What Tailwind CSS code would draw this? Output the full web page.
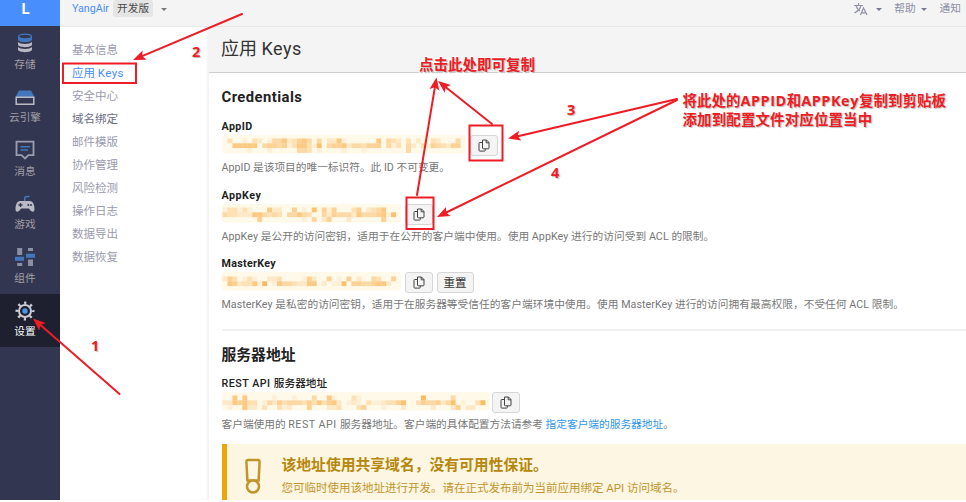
<!DOCTYPE html>
<html lang="zh-CN">
<head>
<meta charset="utf-8">
<title>应用 Keys</title>
<script src="https://cdn.jsdelivr.net/npm/@tailwindcss/browser@4"></script>
</head>
<body class="bg-white">
<svg class="hidden">
  <symbol id="copy" viewBox="0 0 12 13"><path d="M4.500 1h4l2.500 2.500v5.500a.8.8 0 0 1-.8.800H5.300a.8.8 0 0 1-.8-.8zM8.200 1v2.800H11M4.500 3.500H1.800a.8.8 0 0 0-.8.8v7a.8.8 0 0 0 .8.800h4.700a.8.8 0 0 0 .8-.8V10" fill="none" stroke="#444" stroke-width="1"/></symbol>
</svg>
<div class="relative w-[966px] h-[500px] overflow-hidden flex font-['Roboto','Noto_Sans_CJK_SC',sans-serif] whitespace-nowrap">
  <nav class="w-[60px] shrink-0 bg-[#333650] text-[#a09fa6] text-[10.7px] leading-[14px]">
    <div class="h-[26px] bg-[#488efc] text-white font-bold text-[15px] leading-[18px] text-center pr-[9px]">L</div>
    <a class="h-[53.5px] flex flex-col items-center pr-[10px] pt-[7px]">
      <svg class="w-[16px] h-[20px]" viewBox="0 0 16 20"><path d="M1 14v2.500c0 3.500 14 3.500 14 0V14c-2 2.500-12 2.500-14 0zM1 9v2.500c0 3.500 14 3.500 14 0V9c-2 2.500-12 2.500-14 0z" fill="#b9bac4"/><path d="M1 3.500v3c0 3.500 14 3.500 14 0v-3z" fill="#4277bd"/><ellipse cx="8" cy="3.500" rx="6.500" ry="2.300" fill="#333650" stroke="#4277bd" stroke-width="1.300"/></svg>
      <span class="mt-[4.500px]">存储</span></a>
    <a class="h-[53.5px] flex flex-col items-center pr-[10px] pt-[7px]">
      <svg class="w-[20px] h-[20px]" viewBox="0 0 20 20"><path d="M4 3.500h12L19.500 10H.5z" fill="#4277bd"/><path d="M1.200 10.200h17.600v7H1.200z" fill="none" stroke="#b9bac4" stroke-width="1.500"/></svg>
      <span class="mt-[4.500px]">云引擎</span></a>
    <a class="h-[53.5px] flex flex-col items-center pr-[10px] pt-[7px]">
      <svg class="w-[20px] h-[20px]" viewBox="0 0 20 20"><path d="M1.500 1.700h17v13.500h-5L10 18.500l-3.500-3.300h-5z" fill="none" stroke="#9c9db0" stroke-width="1.800"/><path d="M5.500 6.800H15M5.500 10H13" stroke="#4277bd" stroke-width="1.500"/></svg>
      <span class="mt-[5px]">消息</span></a>
    <a class="h-[53.5px] flex flex-col items-center pr-[10px] pt-[7px]">
      <svg class="w-[20px] h-[20px]" viewBox="0 0 20 20"><path d="M9.800 8V4.500Q9.800 2.500 12 2.500h2.500" fill="none" stroke="#4277bd" stroke-width="1.500"/><path d="M5 7h10c3 0 4.500 4 4.500 8 0 4-3 3.500-5.500-.5H6C3.500 18.500.5 19 .5 15 .5 11 2 7 5 7z" fill="#b9bac4"/><path d="M3.500 11h4M5.500 9v4" stroke="#333650" stroke-width="1.300"/><circle cx="13.300" cy="11" r="1" fill="#333650"/><circle cx="16" cy="11" r="1" fill="#333650"/></svg>
      <span class="mt-[4.500px]">游戏</span></a>
    <a class="h-[53.5px] flex flex-col items-center pr-[10px] pt-[7px]">
      <svg class="w-[20px] h-[20px]" viewBox="0 0 20 20"><path d="M2.200 1h5v7h-5zM2.200 16h5v3h-5zM13 1h5v3h-5zM13 12.500h5V19h-5z" fill="#8c8ea3"/><path d="M0 9.700h9v4H0zM11 6.700h9v4h-9z" fill="#4277bd"/></svg>
      <span class="mt-[5px]">组件</span></a>
    <a class="h-[53.5px] flex flex-col items-center pr-[10px] pt-[7px] bg-[#1f202f] text-white">
      <svg class="w-[20px] h-[20px]" viewBox="0 0 20 20"><circle cx="10" cy="10" r="8" fill="none" stroke="#cbcbd6" stroke-width="3" stroke-dasharray="2.200 4.083" stroke-dashoffset="1.100"/><circle cx="10" cy="10" r="6" fill="none" stroke="#cbcbd6" stroke-width="2"/><circle cx="10" cy="10" r="2.700" fill="#4b95ec"/></svg>
      <span class="mt-[4.500px]">设置</span></a>
  </nav>

  <div class="flex-1 min-w-0 flex flex-col">
    <header class="h-[27px] shrink-0 bg-[#f4f4f4] border-b border-[#e8e8e8] flex items-start pl-[12px] text-[10.7px] leading-[17px] text-[#8e8ea6]">
      <span class="text-[#488efc] w-[38px]">YangAir</span>
      <span class="ml-[3px] px-[4px] h-[17px] leading-[17px] bg-[#e5e5e5] rounded-[3px] text-[#4a4a4a] w-[40px]">开发版</span>
      <svg class="ml-[8px] mt-[8px] w-[6px] h-[3px]" viewBox="0 0 6 3"><path d="M0 0h6L3 3z" fill="#777"/></svg>
      <svg class="ml-auto mt-[3px] w-[14px] h-[13px]" viewBox="0 0 14 13" fill="none" stroke="#9292a8" stroke-width="1.200"><path d="M0 2.500h9M4.500 0v2.500M7 2.500Q6 7 .5 10M2 2.500Q3.500 7 6 8M6.500 12l3-7 3.500 7M7.500 9.800h4.500"/></svg>
      <svg class="ml-[8px] mt-[8px] w-[6px] h-[3px]" viewBox="0 0 6 3"><path d="M0 0h6L3 3z" fill="#777790"/></svg>
      <span class="ml-[12px]">帮助</span>
      <svg class="ml-[5px] mt-[8px] w-[6px] h-[3px]" viewBox="0 0 6 3"><path d="M0 0h6L3 3z" fill="#777790"/></svg>
      <span class="ml-[13px] mr-[5px]">通知</span>
    </header>
    <div class="flex-1 flex min-h-0">
      <aside class="w-[149px] shrink-0 pl-[12px] pt-[12px] text-[11.5px] leading-[23.05px] text-[#9a9aae] shadow-[inset_-2px_0_2px_#f3f3f3]">
        <div>基本信息</div>
        <div class="text-[#488efc]">应用 <span class="tracking-[0.4px]">Keys</span></div>
        <div>安全中心</div>
        <div class="text-[#6c6c84]">域名绑定</div>
        <div>邮件模版</div>
        <div>协作管理</div>
        <div>风险检测</div>
        <div>操作日志</div>
        <div>数据导出</div>
        <div>数据恢复</div>
      </aside>
      <main class="flex-1 min-w-0">
        <h1 class="h-[46px] bg-[#f4f4f4] border-b border-[#cfcfcf] pl-[12px] text-[18px] leading-[44px] text-[#333]">应用 <span class="tracking-[0.5px]">Keys</span></h1>
        <div class="pl-[12.500px]">
          <h2 class="h-[46px] text-[14.8px] leading-[48px] font-bold text-[#222] tracking-[0.45px]">Credentials</h2>
          <section class="h-[69px]">
            <div class="h-[16px] text-[10.7px] leading-[15px] font-bold text-[#222] tracking-[0.4px]">AppID</div>
            <div class="flex gap-[4.500px] h-[21px]">
              <svg class="mosaic w-[244px] h-[21px]" data-w="244" data-y="3.500" data-rows="030010320144623564040226100000060432030200320004|006666604554513663170455624435550413042031543255|00000100010000044301000010001000000004"></svg>
              <button class="w-[28px] h-[21px] border border-[#d6d6d6] rounded-[3px] bg-[#f4f4f4] flex items-center justify-center"><svg class="w-[12px] h-[13px]"><use href="#copy"/></svg></button>
            </div>
            <p class="text-[10.7px] leading-[24px] text-[#777]">AppID 是该项目的唯一标识符。此 ID 不可变更。</p>
          </section>
          <section class="h-[68px]">
            <div class="h-[16px] text-[10.7px] leading-[15px] font-bold text-[#222] tracking-[0.5px]">AppKey</div>
            <div class="flex gap-[4.500px] h-[21px]">
              <svg class="mosaic w-[179px] h-[21px]" data-w="179" data-y="3.500" data-rows="133131000622005010705150003502346|43322266434304464300425444264445617|00000005000000001040250002000000500"></svg>
              <button class="w-[28px] h-[21px] border border-[#d6d6d6] rounded-[3px] bg-[#f4f4f4] flex items-center justify-center"><svg class="w-[12px] h-[13px]"><use href="#copy"/></svg></button>
            </div>
            <p class="text-[10.7px] leading-[24px] text-[#777] tracking-[0.05px]">AppKey 是公开的访问密钥，适用于在公开的客户端中使用。使用 AppKey 进行的访问受到 ACL 的限制。</p>
          </section>
          <section class="h-[73px]">
            <div class="h-[16px] text-[10.7px] leading-[15px] font-bold text-[#222] tracking-[0.3px]">MasterKey</div>
            <div class="flex gap-[4px] h-[21px]">
              <svg class="mosaic w-[179px] h-[21px]" data-w="179" data-y="4.500" data-rows="25301310022300001520050105020043005|0652336180164432266020117055445662"></svg>
              <button class="w-[28px] h-[21px] border border-[#d6d6d6] rounded-[3px] bg-[#f4f4f4] flex items-center justify-center"><svg class="w-[12px] h-[13px]"><use href="#copy"/></svg></button>
              <button class="w-[37px] h-[21px] border border-[#d6d6d6] rounded-[3px] bg-[#f4f4f4] text-[11.5px] leading-[18px] text-[#333]">重置</button>
            </div>
            <p class="text-[10.7px] leading-[23px] text-[#777] tracking-[0.04px]">MasterKey 是私密的访问密钥，适用于在服务器等受信任的客户端环境中使用。使用 MasterKey 进行的访问拥有最高权限，不受任何 ACL 限制。</p>
          </section>
          <hr class="border-0 h-[2px] bg-[#f0f0f0]">
          <h2 class="h-[45px] text-[14.8px] leading-[48px] font-bold text-[#222]">服务器地址</h2>
          <section class="h-[68px]">
            <div class="h-[16px] text-[10.7px] leading-[15px] font-medium text-[#222]"><span class="tracking-[0.5px]">REST API </span>服务器地址</div>
            <div class="flex gap-[2px] h-[21px]">
              <svg class="mosaic w-[268px] h-[21px]" data-w="268" data-y="3.500" data-rows="00606000001000100040061000310000000000008000004|22656330142534443536356201210311233570035445247010038|010062203003120005000223000350001000200000200025022"></svg>
              <button class="w-[28px] h-[21px] border border-[#d6d6d6] rounded-[3px] bg-[#f4f4f4] flex items-center justify-center"><svg class="w-[12px] h-[13px]"><use href="#copy"/></svg></button>
            </div>
            <p class="text-[10.7px] leading-[23px] text-[#777]">客户端使用的 <span class="tracking-[0.5px]">REST API </span>服务器地址。客户端的具体配置方法请参考 <a class="text-[#2f96ee]">指定客户端的服务器地址</a>。</p>
          </section>
          <div class="h-[60px] border-l-[5px] border-[#eaa60b] bg-[#fdf6e2] flex text-[#c2952b]">
            <svg class="ml-[17px] mt-[14px] w-[18px] h-[37px]" viewBox="0 0 18 37" fill="none" stroke="#c2952b" stroke-width="2.500"><path d="M4 2h10q1.700 0 1.600 2l-1 18.500H3.400L2.400 4Q2.300 2 4 2z"/><circle cx="9" cy="28.500" r="6" fill="#fdf6e2"/></svg>
            <div class="ml-[20px]">
              <div class="mt-[9px] text-[14.8px] leading-[24px] font-bold text-[#b8860b]">该地址使用共享域名，没有可用性保证。</div>
              <div class="text-[11.5px] leading-[23px]">您可临时使用该地址进行开发。请在正式发布前为当前应用绑定 API 访问域名。</div>
            </div>
          </div>
        </div>
      </main>
    </div>
  </div>

  <!-- Annotation layer -->
  <svg class="absolute left-0 top-0 w-[966px] h-[500px]" viewBox="0 0 966 500" fill="none" stroke="#ee1c25" stroke-width="2" stroke-linecap="round">
    <rect x="63" y="63.500" width="73" height="19.500"/>
    <rect x="469.500" y="125.500" width="33" height="35"/>
    <rect x="406.500" y="197.500" width="27" height="31.500"/>
    <g id="arrows"></g>
  </svg>
  <div class="absolute inset-0 font-['Open_Sans','Noto_Sans_CJK_SC',sans-serif] font-bold text-[14.5px] leading-[19px] text-[#ee1c25] [text-shadow:1px_1px_1px_#bbb,-1px_-1px_0_#fff,1px_-1px_0_#fff,-1px_1px_0_#fff]">
    <span class="absolute left-[91px] top-[336px]">1</span>
    <span class="absolute left-[192px] top-[42px]">2</span>
    <span class="absolute left-[567px] top-[100px]">3</span>
    <span class="absolute left-[551px] top-[163px]">4</span>
    <span class="absolute left-[419px] top-[55px]">点击此处即可复制</span>
    <span class="absolute left-[682.500px] top-[91px]">将此处的<span class="tracking-[0.5px]">APPID</span>和<span class="tracking-[0.5px]">APPKey</span>复制到剪贴板<br><span class="tracking-[0.1px]">添加到配置文件对应位置当中</span></span>
  </div>
</div>
<script>
const NS = 'http://www.w3.org/2000/svg';
function add(parent, tag, attrs) {
  const e = document.createElementNS(NS, tag);
  for (const k in attrs) e.setAttribute(k, attrs[k]);
  parent.appendChild(e);
}
// Masked key values: one digit per cell gives its intensity.
document.querySelectorAll('.mosaic').forEach(s => {
  add(s, 'rect', {x: 0, y: 0, width: s.dataset.w, height: 18.5, rx: 3, fill: '#fff9ea'});
  s.dataset.rows.split('|').forEach((row, r) => [...row].forEach((c, i) => {
    if (+c) add(s, 'rect', {x: i * 4.96 + .5, y: +s.dataset.y + r * 4.8, width: 4.96, height: 4.8, fill: '#f9b04a', 'fill-opacity': c * .11});
  }));
});
// Arrows: start x, start y, tip x, tip y.
const g = document.getElementById('arrows');
[[242,14,133,60],[119.5,394,33,318.5],[492,124,438,81],[417,195,436.500,77.500],[677,99,508,138.500],[677,100,437,217]].forEach(([x1,y1,x2,y2]) => {
  const a = Math.atan2(y2 - y1, x2 - x1), c = Math.cos(a), s = Math.sin(a);
  const p = (d, w) => `${x2 - d * c - w * s},${y2 - d * s + w * c}`;
  add(g, 'path', {d: `M${x1} ${y1}L${p(8, 0)}`});
  add(g, 'polygon', {points: [p(0,0), p(12.5,5), p(10,0), p(12.5,-5)].join(' '), fill: '#ee1c25', stroke: 'none'});
});
</script>
</body>
</html>
